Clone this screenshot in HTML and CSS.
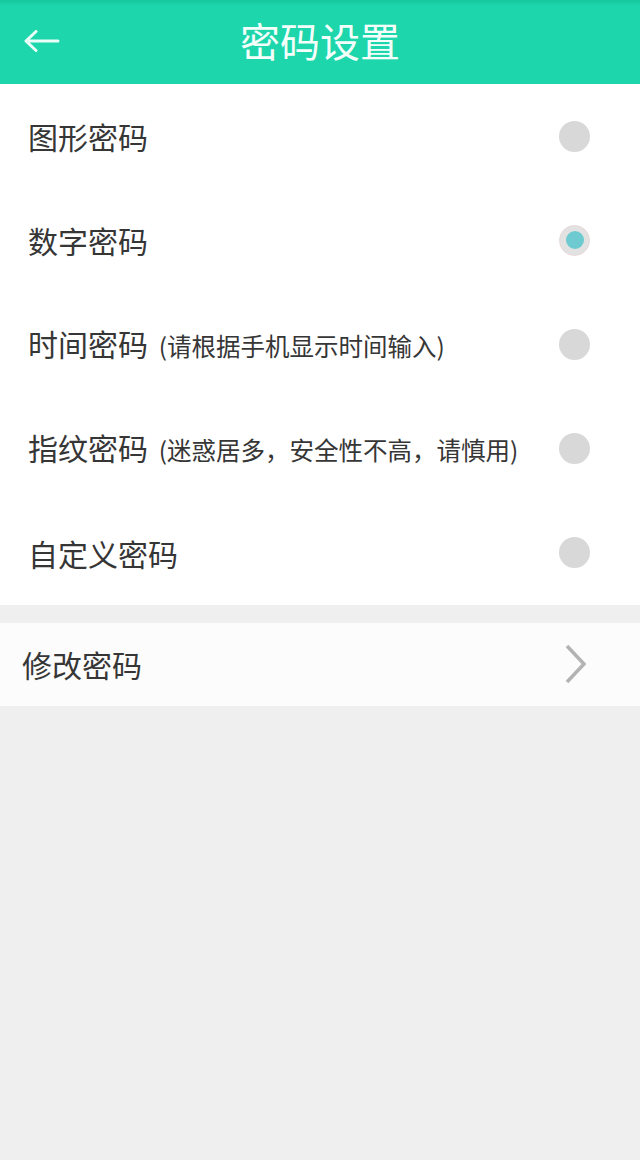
FILE: index.html
```html
<!DOCTYPE html>
<html lang="zh-CN">
    <head>
        <meta charset="utf-8" />
        <meta name="viewport" content="initial-scale=1,maximum-scale=1,user-scalable=no" />
        <title>密码设置</title>
        <link rel="stylesheet" href="styles.css">
    </head>

    <body>
        <div id="app">
            <div class="header">
                <div class="back">
                    <svg width="36" height="22" viewBox="0 0 36 22">
                        <path d="M2 11 H34 M12 1.5 L2 11 L12 20.5" fill="none" stroke="#eafff8" stroke-width="3" stroke-linecap="round" stroke-linejoin="round" />
                    </svg>
                </div>
                <div class="title">密码设置</div>
            </div>
            <div class="list">
                <div class="row">
                    <div class="label">图形密码</div>
                    <div class="radio"></div>
                </div>
                <div class="row">
                    <div class="label">数字密码</div>
                    <div class="radio checked"></div>
                </div>
                <div class="row">
                    <div class="label">时间密码 <span class="tip">(请根据手机显示时间输入)</span></div>
                    <div class="radio"></div>
                </div>
                <div class="row">
                    <div class="label">指纹密码 <span class="tip">(迷惑居多，安全性不高，请慎用)</span></div>
                    <div class="radio"></div>
                </div>
                <div class="row">
                    <div class="label">自定义密码</div>
                    <div class="radio"></div>
                </div>
            </div>
            <div class="link">
                <div class="label">修改密码</div>
                <svg width="24" height="40" viewBox="0 0 24 40">
                    <path d="M3 2 L20 20 L3 38" fill="none" stroke="#b3b3b3" stroke-width="3.5" />
                </svg>
            </div>
        </div>
    </body>
</html>
```

FILE: styles.css
```css
html, body {
    margin: 0;
    padding: 0;
}
body {
    background: #efefef;
    font-family: "Noto Sans CJK SC", "Noto Sans", sans-serif;
}
#app {
    width: 640px;
    min-height: 1160px;
}
.header {
    height: 84px;
    background: linear-gradient(#17c79e 0px, #1dd6ab 6px, #1dd6ab 100%);
    display: flex;
    align-items: center;
    justify-content: center;
    position: relative;
}
.back {
    position: absolute;
    left: 24px;
    top: 30px;
    height: 22px;
}
.back svg {
    display: block;
}
.title {
    color: #f4fffb;
    font-size: 40px;
    line-height: 40px;
    margin-top: -4px;
}
.list {
    background: #ffffff;
    margin-bottom: 18px;
}
.row {
    height: 104.2px;
    display: flex;
    align-items: center;
    justify-content: space-between;
    padding: 0 50px 0 28px;
}
.label {
    font-size: 30px;
    color: #363636;
    line-height: 40px;
}
.tip {
    font-size: 24.5px;
    margin-left: 4px;
}
.radio {
    width: 31px;
    height: 31px;
    border-radius: 50%;
    background: #d8d8d8;
    box-sizing: border-box;
    display: flex;
    align-items: center;
    justify-content: center;
}
.radio.checked {
    background: #e2e2e2;
    border: 1px solid #e8d8d8;
}
.radio.checked::after {
    content: "";
    width: 18px;
    height: 18px;
    border-radius: 50%;
    background: #6ccad0;
}
.link {
    height: 83px;
    background: #fcfcfc;
    display: flex;
    align-items: center;
    justify-content: space-between;
    padding: 0 52px 0 22px;
}
.link svg {
    display: block;
}
```
